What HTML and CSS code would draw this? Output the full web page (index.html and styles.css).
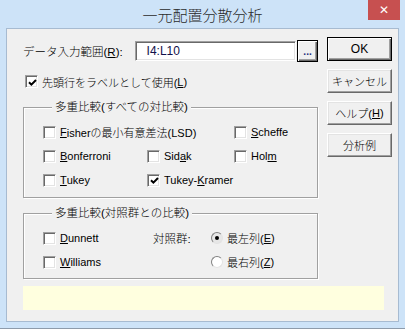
FILE: index.html
```html
<!DOCTYPE html>
<html lang="ja">
<head>
<meta charset="utf-8">
<link rel="stylesheet" href="styles.css">
</head>
<body>
<div class="window">
  <div class="titlebar">
    <span></span>
    <span class="title">一元配置分散分析</span>
    <span class="close">✕</span>
  </div>
  <div class="client">
    <div class="top">
      <div class="left">
        <div class="row-input">
          <span class="lbl">データ入力範囲(<u>R</u>):</span>
          <span class="field">I4:L10</span>
          <span class="dots">...</span>
        </div>
        <label class="chk first"><span class="box on"><svg viewBox="0 0 9 9" width="9" height="9"><path d="M1 4.2 L3.4 6.6 L8 2" fill="none" stroke="#000" stroke-width="2"/></svg></span>先頭行をラベルとして使用(<u>L</u>)</label>

        <fieldset class="group g1">
          <legend>多重比較(すべての対比較)</legend>
          <div class="grid3">
            <label class="chk span2"><span class="box"></span><u>F</u>isherの最小有意差法(LSD)</label>
            <label class="chk"><span class="box"></span><u>S</u>cheffe</label>
            <label class="chk"><span class="box"></span><u>B</u>onferroni</label>
            <label class="chk"><span class="box"></span>Sid<u>a</u>k</label>
            <label class="chk"><span class="box"></span>Hol<u>m</u></label>
            <label class="chk"><span class="box"></span><u>T</u>ukey</label>
            <label class="chk span2"><span class="box on"><svg viewBox="0 0 9 9" width="9" height="9"><path d="M1 4.2 L3.4 6.6 L8 2" fill="none" stroke="#000" stroke-width="2"/></svg></span>Tukey-<u>K</u>ramer</label>
          </div>
        </fieldset>

        <fieldset class="group g2">
          <legend>多重比較(対照群との比較)</legend>
          <div class="grid2">
            <label class="chk"><span class="box"></span><u>D</u>unnett</label>
            <span class="ctl">対照群:</span>
            <label class="chk"><span class="radio sel"><span class="dot"></span></span>最左列(<u>E</u>)</label>
            <label class="chk"><span class="box"></span><u>W</u>illiams</label>
            <span></span>
            <label class="chk"><span class="radio"></span>最右列(<u>Z</u>)</label>
          </div>
        </fieldset>
      </div>
      <div class="buttons">
        <span class="btn default">OK</span>
        <span class="btn">キャンセル</span>
        <span class="btn">ヘルプ(<u>H</u>)</span>
        <span class="btn">分析例</span>
      </div>
    </div>
    <div class="status"></div>
  </div>
</div>
</body>
</html>
```

FILE: styles.css
```css
html, body {
  margin: 0;
  padding: 0;
}
body {
  font-family: "Liberation Sans", "Noto Sans CJK JP", sans-serif;
  font-size: 11px;
  font-weight: 300;
  color: #000;
  background: #cde3f8;
}
.window {
  width: 405px;
  height: 329px;
  box-sizing: border-box;
  background: #cde3f8;
  border-bottom: 1px solid #8d9bab;
  display: flex;
  flex-direction: column;
}
.titlebar {
  height: 28px;
  display: grid;
  grid-template-columns: 1fr auto 1fr;
  align-items: start;
}
.title {
  font-family: "Noto Sans CJK JP", sans-serif;
  font-size: 15px;
  line-height: 20px;
  margin-top: 5px;
  color: #2b2b2b;
}
.close {
  justify-self: end;
  width: 32px;
  height: 20px;
  margin-right: 5px;
  background: #c75050;
  color: #fff;
  font-size: 12px;
  font-weight: bold;
  display: flex;
  align-items: center;
  justify-content: center;
  font-family: "DejaVu Sans", sans-serif;
}
.client {
  margin: 0 6px 0 6px;
  height: 294px;
  box-sizing: border-box;
  border: 1px solid #a7bbd1;
  background: #f0f0f0;
  padding: 8px 6px 0 16px;
}
.top {
  display: flex;
}
.left {
  width: 295px;
}
.buttons {
  margin-left: 9px;
  width: 65px;
  display: flex;
  flex-direction: column;
  gap: 8px;
}
.btn {
  height: 24px;
  box-sizing: border-box;
  border: 1px solid;
  border-color: #fff #696969 #696969 #fff;
  box-shadow: inset -1px -1px 0 #a0a0a0, inset 1px 1px 0 #e3e3e3;
  background: #f0f0f0;
  display: flex;
  align-items: center;
  justify-content: center;
  padding-bottom: 1px;
}
.btn.default {
  border-color: #000;
  box-shadow: inset 1px 1px 0 #fff, inset -1px -1px 0 #696969, inset -2px -2px 0 #a0a0a0;
  font-size: 12px;
}
.row-input {
  margin-top: 3px;
  height: 22px;
  display: flex;
  align-items: center;
}
.lbl {
  width: 112px;
  font-size: 11.5px;
}
.field {
  width: 162px;
  height: 20px;
  box-sizing: border-box;
  background: #fff;
  border: 1px solid;
  border-color: #a0a0a0 #fff #fff #a0a0a0;
  box-shadow: inset 1px 1px 0 #696969, inset -1px -1px 0 #e3e3e3;
  padding-left: 11px;
  display: flex;
  align-items: center;
  font-size: 12px;
  color: #10104a;
}
.dots {
  margin-left: 1px;
  width: 21px;
  height: 22px;
  box-sizing: border-box;
  border: 1px solid #000;
  box-shadow: inset 1px 1px 0 #fff, inset -1px -1px 0 #696969, inset -2px -2px 0 #a0a0a0;
  display: flex;
  align-items: flex-end;
  justify-content: center;
  font-size: 10px;
  font-weight: bold;
  line-height: 12px;
  padding-bottom: 3px;
  color: #1a2a7a;
}
.chk {
  display: flex;
  align-items: center;
  white-space: nowrap;
}
.chk.first {
  margin-top: 13px;
  height: 13px;
  padding-left: 2px;
}
.box {
  width: 13px;
  height: 13px;
  box-sizing: border-box;
  background: #fff;
  border: 1px solid;
  border-color: #a0a0a0 #fff #fff #a0a0a0;
  box-shadow: inset 1px 1px 0 #696969, inset -1px -1px 0 #e3e3e3;
  margin-right: 4px;
  flex: none;
  display: flex;
  align-items: center;
  justify-content: center;
}
.box svg {
  display: block;
  margin: 1px 0 0 1px;
}
.radio {
  width: 12px;
  height: 12px;
  box-sizing: border-box;
  border-radius: 50%;
  background: #fff;
  border: 1px solid;
  border-color: #808080 #e3e3e3 #e3e3e3 #808080;
  margin-right: 4px;
  flex: none;
  display: flex;
  align-items: center;
  justify-content: center;
}
.radio.sel {
  background: #e6e6e6;
}
.dot {
  width: 4px;
  height: 4px;
  border-radius: 50%;
  background: #000;
}
u {
  text-decoration: underline;
  text-underline-offset: 1px;
}
.group {
  margin: 12px 0 0 0;
  padding: 6px 0 0 19px;
  border: 1px solid #a0a0a0;
  box-shadow: inset 1px 1px 0 #fff, 1px 1px 0 #fff;
  min-width: 0;
}
.group legend {
  margin-left: 9px;
  padding: 0 3px;
  background: #f0f0f0;
  line-height: 14px;
  font-size: 11.5px;
}
.g1 {
  padding-bottom: 5px;
}
.g2 {
  margin-top: 8px;
  padding-bottom: 4px;
}
.grid3 {
  display: grid;
  grid-template-columns: 104px 87px 1fr;
  grid-auto-rows: 24px;
}
.grid3 .span2 {
  grid-column: span 2;
}
.grid2 {
  display: grid;
  grid-template-columns: 110px 58px 1fr;
  grid-auto-rows: 24px;
}
.ctl {
  display: flex;
  align-items: center;
  font-size: 11.5px;
}
.status {
  margin-top: 7px;
  width: 361px;
  height: 24px;
  background: #ffffdf;
}
```
